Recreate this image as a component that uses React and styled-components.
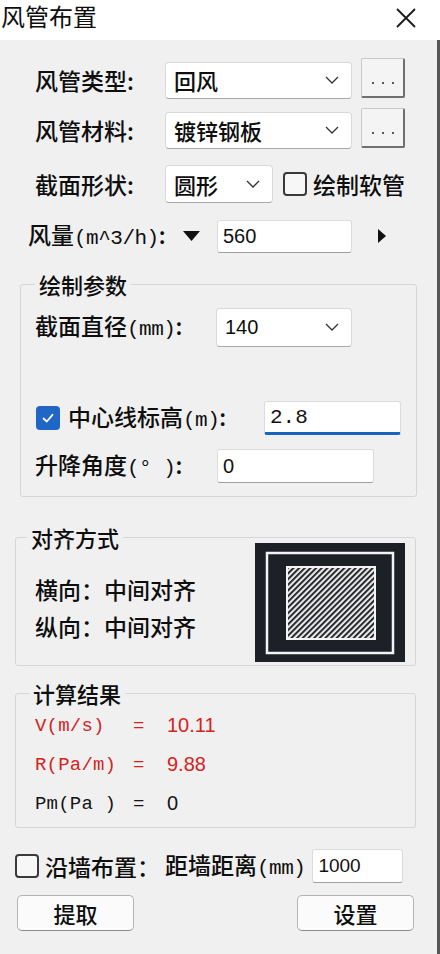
import React from "react";
import styled, { createGlobalStyle } from "styled-components";

const GlobalStyle = createGlobalStyle`
  html, body {
    margin: 0;
    padding: 0;
    background: #f0f0f0;
  }
  * {
    box-sizing: border-box;
  }
`;

const CJK = `"Noto Sans CJK SC", "Noto Sans", sans-serif`;

const Dialog = styled.div`
  width: 440px;
  height: 954px;
  display: flex;
  flex-direction: column;
  font-family: ${CJK};
  font-weight: 500;
  color: #0e0e0e;
`;

const TitleBar = styled.div`
  height: 40px;
  background: #ffffff;
  display: flex;
  align-items: flex-start;
  justify-content: space-between;
  padding: 3px 24px 0 1px;
`;

const Title = styled.div`
  font-size: 24px;
  line-height: 26px;
  font-weight: 400;
`;

const Body = styled.div`
  flex: 1;
  background: #f0f0f0;
  border-right: 3px solid #585858;
  padding-top: 20px;
  display: flex;
  flex-direction: column;
`;

const Row = styled.div`
  display: flex;
  align-items: center;
  height: ${(p) => p.h || 40}px;
  margin-top: ${(p) => p.mt || 0}px;
  padding-left: ${(p) => p.pl || 0}px;
`;

const Label = styled.div`
  width: ${(p) => (p.w ? `${p.w}px` : "auto")};
  margin-left: ${(p) => p.ml || 0}px;
  font-size: 23px;
  line-height: 1;
  white-space: nowrap;
  flex-shrink: 0;
`;

const Unit = styled.span`
  font-family: "Liberation Mono", monospace;
  font-weight: 400;
  font-size: 21px;
  letter-spacing: -0.5px;
`;

const SelectBox = styled.div`
  width: ${(p) => p.w}px;
  height: ${(p) => p.h || 38}px;
  background: #ffffff;
  border: 1px solid #d9d9d9;
  border-bottom-color: #a8a8a8;
  border-radius: 4px;
  display: flex;
  align-items: center;
  justify-content: space-between;
  padding: 0 12px 0 8px;
  flex-shrink: 0;
`;

const SelectText = styled.span`
  font-family: ${(p) => (p.latin ? `"Liberation Sans", sans-serif` : CJK)};
  font-size: ${(p) => (p.latin ? 20 : 22)}px;
  font-weight: ${(p) => (p.latin ? 400 : 500)};
  line-height: 1;
`;

const EllipsisButton = styled.div`
  width: 44px;
  height: 40px;
  margin-left: 9px;
  margin-bottom: 4px;
  background: #f4f4f4;
  border: 1px solid #c9c9c9;
  border-right: 2px solid #707070;
  border-bottom: 2px solid #707070;
  border-radius: 2px;
  display: flex;
  align-items: center;
  justify-content: center;
  gap: 8px;
`;

const Dot = styled.span`
  width: 2px;
  height: 2px;
  background: #555;
  margin-top: 10px;
`;

const TextInput = styled.div`
  width: ${(p) => p.w}px;
  height: ${(p) => p.h || 34}px;
  margin-left: ${(p) => p.ml || 0}px;
  background: #ffffff;
  border: 1px solid #dcdcdc;
  border-bottom: ${(p) => (p.focused ? "3px solid #1565c0" : "1px solid #9f9f9f")};
  border-radius: 3px;
  display: flex;
  align-items: center;
  padding-left: ${(p) => p.pad || 5}px;
  font-family: ${(p) => (p.mono ? `"Liberation Mono", monospace` : `"Liberation Sans", sans-serif`)};
  font-weight: 400;
  font-size: ${(p) => p.fs || 20}px;
  color: #111;
  flex-shrink: 0;
`;

const CheckBox = styled.div`
  width: 24px;
  height: 24px;
  margin-left: ${(p) => p.ml || 0}px;
  border-radius: 4px;
  border: ${(p) => (p.checked ? "none" : "2px solid #3a3a3a")};
  background: ${(p) => (p.checked ? "#1f66c7" : "#f7f7f7")};
  display: flex;
  align-items: center;
  justify-content: center;
  flex-shrink: 0;
`;

const Group = styled.div`
  position: relative;
  margin-top: ${(p) => p.mt}px;
  margin-left: ${(p) => p.ml}px;
  width: ${(p) => p.w}px;
  height: ${(p) => p.h}px;
  border: 1px solid #d6d6d6;
  border-radius: 3px;
  padding-top: ${(p) => p.pt || 0}px;
`;

const Legend = styled.div`
  position: absolute;
  top: -14px;
  left: ${(p) => p.left}px;
  padding: 0 4px;
  background: #f0f0f0;
  font-size: 22px;
  line-height: 26px;
`;

const AlignBody = styled.div`
  display: flex;
  justify-content: space-between;
  padding: 5px 10px 0 19px;
`;

const AlignText = styled.div`
  display: flex;
  flex-direction: column;
  padding-top: 28px;
`;

const AlignLine = styled.div`
  font-size: 23px;
  line-height: 37px;
  height: 37px;
`;

const ResultLine = styled.div`
  display: grid;
  grid-template-columns: 98px 34px auto;
  align-items: center;
  height: 39px;
  padding-left: 19px;
  color: ${(p) => (p.red ? "#d3241f" : "#141414")};
`;

const ResultName = styled.span`
  font-family: "Liberation Mono", monospace;
  font-weight: 400;
  font-size: 19px;
  letter-spacing: 0.2px;
`;

const ResultValue = styled.span`
  font-family: "Liberation Sans", sans-serif;
  font-weight: 400;
  font-size: 20px;
`;

const ButtonRow = styled.div`
  display: flex;
  justify-content: space-between;
  margin-top: 9px;
  padding: 0 23px 0 17px;
`;

const Button = styled.div`
  width: 117px;
  height: 36px;
  background: #fbfbfb;
  border: 1px solid #b4b4b4;
  border-bottom-color: #8a8a8a;
  border-radius: 5px;
  display: flex;
  align-items: center;
  justify-content: center;
  font-size: 22px;
`;

const Chevron = () => (
  <svg width="14" height="8" viewBox="0 0 14 8">
    <path d="M1 1 L7 7 L13 1" fill="none" stroke="#333" strokeWidth="1.3" />
  </svg>
);

const Check = () => (
  <svg width="16" height="16" viewBox="0 0 16 16">
    <path d="M3.5 8.5 L6.8 11.5 L12.5 4.8" fill="none" stroke="#fff" strokeWidth="1.8" strokeLinecap="round" strokeLinejoin="round" />
  </svg>
);

const CloseIcon = () => (
  <svg width="20" height="20" viewBox="0 0 20 20" style={{ marginTop: 5 }}>
    <path d="M1 1 L19 19 M19 1 L1 19" stroke="#1a1a1a" strokeWidth="1.8" />
  </svg>
);

const Diagram = () => (
  <svg width="150" height="119" viewBox="0 0 150 119">
    <defs>
      <pattern id="hatch" width="4" height="4" patternUnits="userSpaceOnUse" patternTransform="rotate(45)">
        <rect width="4" height="4" fill="#e8e8e8" />
        <rect width="1.8" height="4" fill="#15181d" />
      </pattern>
    </defs>
    <rect width="150" height="119" fill="#1d2127" />
    <rect x="12" y="10" width="126" height="100" fill="none" stroke="#f4f4f4" strokeWidth="2.5" />
    <rect x="32" y="24" width="88" height="72" fill="url(#hatch)" stroke="#f4f4f4" strokeWidth="2" />
  </svg>
);

export default function App() {
  return (
    <Dialog>
      <GlobalStyle />
      <TitleBar>
        <Title>风管布置</Title>
        <CloseIcon />
      </TitleBar>
      <Body>
        <Row pl={35}>
          <Label w={130}>风管类型:</Label>
          <SelectBox w={187} h={37}>
            <SelectText>回风</SelectText>
            <Chevron />
          </SelectBox>
          <EllipsisButton>
            <Dot />
            <Dot />
            <Dot />
          </EllipsisButton>
        </Row>
        <Row pl={35} mt={10}>
          <Label w={130}>风管材料:</Label>
          <SelectBox w={187} h={37}>
            <SelectText>镀锌钢板</SelectText>
            <Chevron />
          </SelectBox>
          <EllipsisButton>
            <Dot />
            <Dot />
            <Dot />
          </EllipsisButton>
        </Row>
        <Row pl={35} mt={14}>
          <Label w={130}>截面形状:</Label>
          <SelectBox w={108} h={38}>
            <SelectText>圆形</SelectText>
            <Chevron />
          </SelectBox>
          <CheckBox ml={10} />
          <Label ml={6}>绘制软管</Label>
        </Row>
        <Row pl={28} mt={12}>
          <Label w={155}>
            风量<Unit>(m^3/h)</Unit>:
          </Label>
          <svg width="17" height="10" viewBox="0 0 17 10">
            <polygon points="0,0 17,0 8.5,10" fill="#111" />
          </svg>
          <TextInput w={135} h={33} ml={17}>
            560
          </TextInput>
          <svg width="8" height="14" viewBox="0 0 8 14" style={{ marginLeft: 26 }}>
            <polygon points="0,0 8,7 0,14" fill="#111" />
          </svg>
        </Row>

        <Group mt={28} ml={20} w={397} h={213} pt={22}>
          <Legend left={14}>绘制参数</Legend>
          <Row pl={14}>
            <Label w={181}>
              截面直径<Unit>(mm)</Unit>:
            </Label>
            <SelectBox w={136} h={39}>
              <SelectText latin>140</SelectText>
              <Chevron />
            </SelectBox>
          </Row>
          <Row pl={14} mt={51}>
            <CheckBox checked ml={1}>
              <Check />
            </CheckBox>
            <Label w={196} ml={8}>
              中心线标高<Unit>(m)</Unit>:
            </Label>
            <TextInput w={137} h={34} focused mono fs={21}>
              2.8
            </TextInput>
          </Row>
          <Row pl={14} mt={8}>
            <Label w={182}>
              升降角度<Unit>(° )</Unit>:
            </Label>
            <TextInput w={157} h={34}>
              0
            </TextInput>
          </Row>
        </Group>

        <Group mt={40} ml={15} w={401} h={129}>
          <Legend left={11}>对齐方式</Legend>
          <AlignBody>
            <AlignText>
              <AlignLine>横向：中间对齐</AlignLine>
              <AlignLine>纵向：中间对齐</AlignLine>
            </AlignText>
            <Diagram />
          </AlignBody>
        </Group>

        <Group mt={27} ml={15} w={401} h={135} pt={12}>
          <Legend left={13}>计算结果</Legend>
          <ResultLine red>
            <ResultName>V(m/s)</ResultName>
            <ResultName>=</ResultName>
            <ResultValue>10.11</ResultValue>
          </ResultLine>
          <ResultLine red>
            <ResultName>R(Pa/m)</ResultName>
            <ResultName>=</ResultName>
            <ResultValue>9.88</ResultValue>
          </ResultLine>
          <ResultLine>
            <ResultName>Pm(Pa )</ResultName>
            <ResultName>=</ResultName>
            <ResultValue>0</ResultValue>
          </ResultLine>
        </Group>

        <Row pl={15} mt={18}>
          <CheckBox />
          <Label ml={6}>沿墙布置：</Label>
          <Label ml={5}>
            距墙距离<Unit>(mm)</Unit>
          </Label>
          <TextInput w={91} h={34} ml={7} fs={19}>
            1000
          </TextInput>
        </Row>
        <ButtonRow>
          <Button>提取</Button>
          <Button>设置</Button>
        </ButtonRow>
      </Body>
    </Dialog>
  );
}
